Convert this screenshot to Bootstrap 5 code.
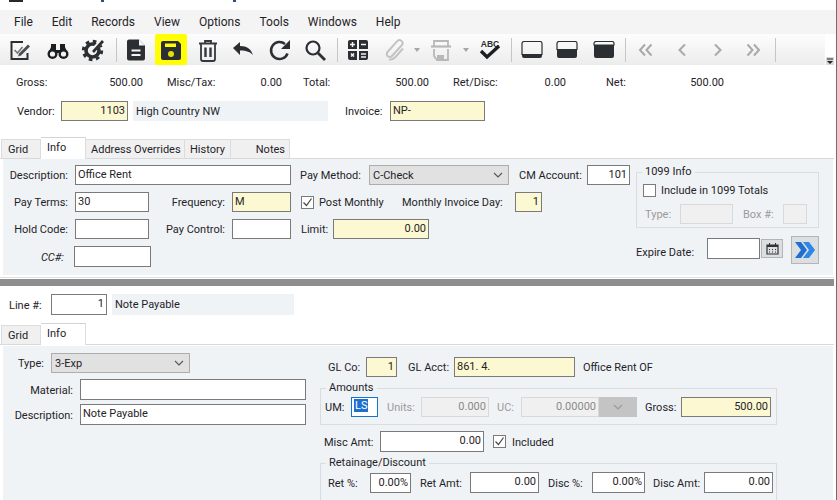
<!DOCTYPE html>
<html lang="en">
<head>
<meta charset="utf-8">
<title>Records</title>
<link href="https://cdn.jsdelivr.net/npm/bootstrap@5.3.0/dist/css/bootstrap.min.css" rel="stylesheet">
<style>
html,body{height:500px;overflow:hidden;background:#fff;}
body{font-family:Roboto,"Noto Sans",sans-serif;font-size:11px;line-height:14px;color:#1f2328;white-space:nowrap;}
.frame{width:837px;height:500px;overflow:hidden;border-right:1px solid #6f6f6f;position:relative;}
.titlestrip{height:10px;display:flex;align-items:flex-start;}
.titlemark{height:2px;background:#2a2a2a;display:block;}
.tm1{width:14px;margin-left:9px;}
.tm2{width:3px;margin-left:78px;background:#2c4f86;}
.tm3{width:3px;margin-left:129px;background:#2c4f86;}
.menubar{height:24px;background:#f4f4f4;font-size:12px;padding-left:14px;align-items:center;}
.menubar span{display:block;}
.menubar .mg{margin-left:19px;}
.toolwrap{position:relative;height:31px;background:#fff;}
.toolbar{height:31px;width:825px;background:linear-gradient(#fdfdfd,#ececec);padding-left:10px;align-items:center;}
.overflowbtn{position:absolute;left:826px;top:23px;width:8px;height:8px;background:#d8d8d8;}
.overflowbtn svg{display:block;}
.slot{width:20px;height:31px;display:flex;justify-content:center;align-items:center;flex:none;}
.slot svg{flex:none;display:block;}
.hilite{background:#ffff00;width:32px;margin-left:9px;margin-right:-6px;border-radius:2px;height:31px;}
.sepline{width:1px;height:24px;background:#c6c6c6;}
.tabsrow{height:21px;align-items:flex-end;padding-left:1px;}
.tabitem{height:19px;background:#f0f0f0;border:1px solid #dcdcdc;border-bottom:0;border-left:0;padding:3px 0 0 5px;display:block;}
.tabitem.first{border-left:1px solid #dcdcdc;padding-left:6px;}
.tabitem.on{height:22px;background:#fff;padding-left:6px;padding-top:3px;position:relative;margin-bottom:-1px;border-top:1px solid #d4d4d4;}
.panelbox{background:#f0f3f6;margin-left:3px;width:830px;}
.panelline{border-top:1px solid #d9d9d9;width:834px;height:1px;}
.panelline.two{height:2px;}
.splitter{width:834px;height:10px;border-top:1px solid #dedede;margin-top:2px;padding-top:1px;}
.splitter div{height:7px;background:#8e8e8e;}
.ctl{height:20px;border:1px solid #7a7a7a;background:#fff;padding:0 2px;line-height:17px;color:#1f2328;flex:none;display:block;}
.ctl.h21{height:21px;}
.yel{background:#fcf9d2;}
.numr{text-align:right;}
.off{background:#f0f0f0;border-color:#d9d9d9;color:#8a8a8a;}
.pick{background:#e1e1e1;border-color:#adadad;display:flex;justify-content:space-between;align-items:center;padding:0 5px 0 3px;}
.lbl{flex:none;display:block;}
.formrow .lbl{padding-top:2px;}
.lbl.r{text-align:right;}
.lblemph{font-style:italic;}
.muted{color:#9a9a9a;}
.formrow{display:flex;align-items:center;}
.topline{align-items:flex-start;}
.box{border:1px solid #7a7a7a;width:13px;height:13px;background:#fff;flex:none;display:flex;align-items:center;justify-content:center;}
.box svg{display:block;}
.infofill{background:#f0f3f6;height:20px;padding-left:3px;line-height:21px;flex:none;}
.infofill.tall{height:21px;}
.gfield{border:1px solid #d9dde0;margin:0;padding:0;}
.gfield legend{float:none;width:auto;font-size:11px;line-height:14px;margin:0 0 0 5px;padding:0 3px;}
.sumrow{height:14px;margin-top:10px;}
.wd19{width:19px}.wd24{width:24px}.wd25{width:25px}.wd27{width:27px}.wd28{width:28px}.wd30{width:30px}.wd31{width:31px}.wd33{width:33px}.wd35{width:35px}.wd37{width:37px}.wd38{width:38px}.wd39{width:39px}.wd40{width:40px}.wd41{width:41px}.wd43{width:43px}.wd44{width:44px}.wd45{width:45px}.wd46{width:46px}.wd51{width:51px}.wd53{width:53px}.wd56{width:56px}.wd59{width:59px}.wd61{width:61px}.wd62{width:62px}.wd65{width:65px}.wd67{width:67px}.wd68{width:68px}.wd69{width:69px}.wd74{width:74px}.wd76{width:76px}.wd77{width:77px}.wd78{width:78px}.wd90{width:90px}.wd95{width:95px}.wd96{width:96px}.wd99{width:99px}.wd102{width:102px}.wd104{width:104px}.wd121{width:121px}.wd139{width:139px}.wd140{width:140px}.wd182{width:182px}.wd195{width:195px}.wd216{width:216px}.wd226{width:226px}
.lf1{margin-left:1px}.lf2{margin-left:2px}.lf3{margin-left:3px}.lf4{margin-left:4px}.lf5{margin-left:5px}.lf6{margin-left:6px}.lf7{margin-left:7px}.lf8{margin-left:8px}.lf9{margin-left:9px}.lf10{margin-left:10px}.lf11{margin-left:11px}.lf15{margin-left:15px}.lf16{margin-left:16px}.lf17{margin-left:17px}.lf18{margin-left:18px}.lf21{margin-left:21px}.lf24{margin-left:24px}.lf40{margin-left:40px}
.tp2{margin-top:2px}.tp3{margin-top:3px}.tp8{margin-top:8px}
.rowgap{margin-top:7px;}
.rowgap6{margin-top:6px;}
.vendorrow{margin-top:12px;}
.linerow{margin-top:7px;}
.leftcol{width:633px;flex:none;padding-top:6px;}
.rightcol{width:183px;flex:none;padding-top:6px;}
.p1{height:116px;}
.p2{height:170px;display:flex;}
.p2left{width:317px;flex:none;padding-top:7px;}
.p2right{width:460px;flex:none;padding-top:11px;}
.f1099{height:63px;width:183px;}
.bigbtn{width:28px;height:28px;background:#dcdfe2;border:1px solid #b5b5b5;flex:none;display:flex;align-items:center;justify-content:center;}
.calbtn{width:22px;height:19px;background:#dcdfe2;border:1px solid #b5b5b5;flex:none;display:flex;align-items:center;justify-content:center;}
.sel{background:#1f6fd0;color:#fff;display:inline-block;line-height:13px;padding:0 1px;}
.focusbox{border-color:#1673d0;padding:1px 2px;line-height:14px;}
.drop{width:38px;height:20px;background:#c4c4c4;flex:none;display:flex;align-items:center;justify-content:center;}
.fset-am{width:457px;height:44px;}
.fset-rt{width:457px;height:50px;}
</style>
</head>
<body>
<div class="frame">
  <div class="titlestrip"><span class="titlemark tm1"></span><span class="titlemark tm2"></span><span class="titlemark tm3"></span></div>
  <nav class="menubar d-flex">
    <span>File</span><span class="mg">Edit</span><span class="mg">Records</span><span class="mg">View</span><span class="mg">Options</span><span class="mg">Tools</span><span class="mg">Windows</span><span class="mg">Help</span>
  </nav>
  <div class="toolwrap">
    <div class="toolbar d-flex">
      <div class="slot"><svg width="24" height="24" viewBox="0 0 24 24"><path d="M15 4H3.500v17h16v-6" fill="none" stroke="#2b2f33" stroke-width="2"/><path d="M6.500 12l3 3 5-6" fill="none" stroke="#777" stroke-width="1.600"/><path d="M11 15.500l9-9 2 2-9 9-3 1z" fill="#4a4d50"/></svg></div>
      <div class="slot lf18"><svg width="24" height="24" viewBox="0 0 24 24"><g fill="#1c1f22"><path d="M5 6h5v4H5zM14 6h5v4h-5z"/><path d="M5 9h5v3h4V9h5l3 7h-8v-1h-4v1H2z"/><circle cx="6.500" cy="16" r="5"/><circle cx="17.500" cy="16" r="5"/></g><circle cx="6.500" cy="16" r="2.600" fill="#f4f4f4"/><circle cx="17.500" cy="16" r="2.600" fill="#f4f4f4"/></svg></div>
      <div class="slot lf15"><svg width="24" height="24" viewBox="0 0 24 24"><circle cx="11.500" cy="12.500" r="6.500" fill="none" stroke="#2b2f33" stroke-width="3.600"/><circle cx="11.500" cy="12.500" r="9.200" fill="none" stroke="#2b2f33" stroke-width="3" stroke-dasharray="3.600 3.630"/><path d="M11 13L21 3" stroke="#f4f4f4" stroke-width="4.500"/><path d="M11 13l10-11 2 2-10 11z" fill="#2b2f33"/></svg></div>
      <div class="slot lf3"><div class="sepline"></div></div>
      <div class="slot"><svg width="24" height="24" viewBox="0 0 24 24"><path d="M5 1.500h10l6 6v13a2 2 0 0 1-2 2H5a2 2 0 0 1-2-2v-17a2 2 0 0 1 2-2z" fill="#2b2f33"/><path d="M15 1.500l6 6h-6z" fill="#f6f6f6"/><path d="M7.500 12.500h9M7.500 17h9" stroke="#f4f4f4" stroke-width="2"/></svg></div>
      <div class="slot hilite"><svg width="24" height="24" viewBox="0 0 24 24"><path d="M4 3h15l3 3v14a2 2 0 0 1-2 2H4a2 2 0 0 1-2-2V5a2 2 0 0 1 2-2z" fill="#2b2f33"/><path d="M6 5.500h11V9H6z" fill="#ffff00"/><circle cx="12" cy="16" r="3" fill="#e6e000"/></svg></div>
      <div class="slot lf17"><svg width="24" height="24" viewBox="0 0 24 24"><path d="M3 5.500h18M9 5.500V3h6v2.500" fill="none" stroke="#34383c" stroke-width="1.800"/><path d="M5 6v15a2 2 0 0 0 2 2h10a2 2 0 0 0 2-2V6" fill="none" stroke="#34383c" stroke-width="1.800"/><path d="M9.500 9.500v9.500M14.500 9.500v9.500" stroke="#34383c" stroke-width="2.400"/></svg></div>
      <div class="slot lf15"><svg width="24" height="24" viewBox="0 0 24 24"><path d="M2 10l7-6v4c7 0 11 3 13 9-3-3-6-4.500-13-4.500V17z" fill="#2b2f33"/></svg></div>
      <div class="slot lf17"><svg width="24" height="24" viewBox="0 0 24 24"><path d="M19.500 15.500A8.500 8.500 0 1 1 17 6" fill="none" stroke="#2b2f33" stroke-width="2.500"/><path d="M22 2v9h-9z" fill="#2b2f33"/></svg></div>
      <div class="slot lf15"><svg width="24" height="24" viewBox="0 0 24 24"><circle cx="10" cy="10" r="6.500" fill="none" stroke="#2b2f33" stroke-width="2.200"/><path d="M15 15l7 7" stroke="#2b2f33" stroke-width="2.800"/></svg></div>
      <div class="slot lf2"><div class="sepline"></div></div>
      <div class="slot lf1"><svg width="24" height="24" viewBox="0 0 24 24"><g fill="#2b2f33"><path d="M4 2h7v9H2V4a2 2 0 0 1 2-2zM13 2h7a2 2 0 0 1 2 2v7h-9zM2 13h9v9H4a2 2 0 0 1-2-2zM13 13h9v7a2 2 0 0 1-2 2h-7z"/></g><path d="M4 6.500h5M6.500 4v5M15 6.500h5M15 16h5M15 19h5" stroke="#f4f4f4" stroke-width="1.500"/><path d="M5 15.500l3 3M8 15.500l-3 3" stroke="#f4f4f4" stroke-width="1.500"/></svg></div>
      <div class="slot lf16"><svg width="24" height="24" viewBox="0 0 24 24"><path d="M19 8l-9 10a3 3 0 0 1-4.500-4L15 3.500a2 2 0 0 1 5 3.500L9.500 18.500M7 21.500c3 .5 5-1 6-2l8-9" fill="none" stroke="#c2c2c2" stroke-width="1.900"/></svg></div>
      <div class="slot lf3"><svg width="8" height="4" viewBox="0 0 8 4"><path d="M1 0h6L4 4z" fill="#a6a6a6"/></svg></div>
      <div class="slot lf4"><svg width="24" height="24" viewBox="0 0 24 24"><path d="M5 8V3h14v5" fill="none" stroke="#b8b8b8" stroke-width="1.800"/><path d="M2 8.500h20" stroke="#b8b8b8" stroke-width="2.200"/><path d="M5 11v7l3 4h11V11" fill="none" stroke="#b8b8b8" stroke-width="1.800"/><path d="M8 17h7v5H8z" fill="#b8b8b8"/></svg></div>
      <div class="slot lf5"><svg width="8" height="4" viewBox="0 0 8 4"><path d="M1 0h6L4 4z" fill="#a6a6a6"/></svg></div>
      <div class="slot lf4"><svg width="24" height="24" viewBox="0 0 24 24"><text x="12" y="9" text-anchor="middle" font-family="Liberation Sans" font-weight="700" font-size="8.500" fill="#2b2f33">ABC</text><path d="M3 13l6 6L21 8" fill="none" stroke="#1c1f22" stroke-width="3.400"/></svg></div>
      <div class="slot lf1"><div class="sepline"></div></div>
      <div class="slot lf1"><svg width="22" height="18" viewBox="0 0 22 18"><path d="M3 .5h16a2 2 0 0 1 2 2v11H1v-11a2 2 0 0 1 2-2z" fill="none" stroke="#2b2f33" stroke-width="1.200"/><path d="M1 13.500h20V15a2 2 0 0 1-2 2H3a2 2 0 0 1-2-2z" fill="#2b2f33"/></svg></div>
      <div class="slot lf15"><svg width="22" height="18" viewBox="0 0 22 18"><path d="M3 .5h16a2 2 0 0 1 2 2v6H1v-6a2 2 0 0 1 2-2z" fill="none" stroke="#2b2f33" stroke-width="1.200"/><path d="M1 8h20v7a2 2 0 0 1-2 2H3a2 2 0 0 1-2-2z" fill="#2b2f33"/></svg></div>
      <div class="slot lf17"><svg width="22" height="18" viewBox="0 0 22 18"><path d="M3 .5h16a2 2 0 0 1 2 2V4H1V2.500a2 2 0 0 1 2-2z" fill="none" stroke="#2b2f33" stroke-width="1.200"/><path d="M1 4h20v11a2 2 0 0 1-2 2H3a2 2 0 0 1-2-2z" fill="#2b2f33"/></svg></div>
      <div class="slot lf1"><div class="sepline"></div></div>
      <div class="slot lf1"><svg width="16" height="14" viewBox="0 0 16 14"><path d="M7 1.500L2 7l5 5.500M13.500 1.500L8.500 7l5 5.500" fill="none" stroke="#a9a9a9" stroke-width="2"/></svg></div>
      <div class="slot lf16"><svg width="10" height="14" viewBox="0 0 10 14"><path d="M8 1.500L2.500 7 8 12.500" fill="none" stroke="#a9a9a9" stroke-width="2"/></svg></div>
      <div class="slot lf16"><svg width="10" height="14" viewBox="0 0 10 14"><path d="M2 1.500L7.500 7 2 12.500" fill="none" stroke="#a9a9a9" stroke-width="2"/></svg></div>
      <div class="slot lf15"><svg width="16" height="14" viewBox="0 0 16 14"><path d="M2.500 1.500l5 5.500-5 5.500M9 1.500l5 5.500-5 5.500" fill="none" stroke="#a9a9a9" stroke-width="2"/></svg></div>
      <div class="slot lf2"><div class="sepline"></div></div>
    </div>
    <div class="overflowbtn"><svg width="8" height="8" viewBox="0 0 8 8"><path d="M1 1.500h6v1H1zM1 4h6L4 7z" fill="#222"/></svg></div>
  </div>

  <div class="formrow sumrow">
    <span class="lbl lf16 wd35">Gross:</span><span class="lbl r wd90 lf2">500.00</span>
    <span class="lbl lf24 wd62">Misc/Tax:</span><span class="lbl r wd53">0.00</span>
    <span class="lbl lf21 wd46">Total:</span><span class="lbl r wd78 lf2">500.00</span>
    <span class="lbl lf24 wd62">Ret/Disc:</span><span class="lbl r wd51">0.00</span>
    <span class="lbl lf40 wd56">Net:</span><span class="lbl r wd62">500.00</span>
  </div>
  <div class="formrow vendorrow">
    <span class="lbl lf17 wd37">Vendor:</span>
    <span class="ctl yel numr lf7 wd67">1103</span>
    <span class="infofill lf5 wd195">High Country NW</span>
    <span class="lbl lf17 wd38">Invoice:</span>
    <span class="ctl yel lf7 wd95">NP-</span>
  </div>

  <div class="tabsrow d-flex mt-3">
    <span class="tabitem first wd40">Grid</span><span class="tabitem on wd45">Info</span><span class="tabitem wd99">Address Overrides</span><span class="tabitem wd46">History</span><span class="tabitem wd59 text-end pe-1">Notes</span>
  </div>
  <div class="panelline"></div>
  <div class="panelbox p1 d-flex">
    <div class="leftcol">
      <div class="formrow">
        <span class="lbl r wd65">Description:</span><span class="ctl lf7 wd216">Office Rent</span>
        <span class="lbl lf9 wd61">Pay Method:</span><span class="ctl pick lf8 wd140">C-Check<svg width="10" height="6" viewBox="0 0 10 6"><path d="M1 1l4 4 4-4" fill="none" stroke="#555" stroke-width="1.100"/></svg></span>
        <span class="lbl lf10 wd61">CM Account:</span><span class="ctl numr lf7 wd43">101</span>
      </div>
      <div class="formrow rowgap">
        <span class="lbl r wd65">Pay Terms:</span><span class="ctl lf7 wd74">30</span>
        <span class="lbl r wd76">Frequency:</span><span class="ctl yel lf7 wd59">M</span>
        <span class="box lf10"><svg width="11" height="11" viewBox="0 0 11 11"><path d="M1.500 5.500l3 3 5-7" fill="none" stroke="#444" stroke-width="1.200"/></svg></span>
        <span class="lbl lf5 wd62">Post Monthly</span>
        <span class="lbl lf21 wd102">Monthly Invoice Day:</span><span class="ctl yel numr lf11 wd27">1</span>
      </div>
      <div class="formrow rowgap">
        <span class="lbl r wd65">Hold Code:</span><span class="ctl lf7 wd74"></span>
        <span class="lbl r wd76">Pay Control:</span><span class="ctl lf7 wd59"></span>
        <span class="lbl lf10 wd25">Limit:</span><span class="ctl yel numr lf7 wd96">0.00</span>
      </div>
      <div class="formrow rowgap">
        <span class="lbl r wd61 lblemph">CC#:</span><span class="ctl h21 lf10 wd77"></span>
      </div>
    </div>
    <div class="rightcol">
      <fieldset class="gfield f1099">
        <legend>1099 Info</legend>
        <div class="formrow tp3 lf6">
          <span class="box"></span><span class="lbl lf5">Include in 1099 Totals</span>
        </div>
        <div class="formrow rowgap6 lf8">
          <span class="lbl muted wd28">Type:</span><span class="ctl off lf7 wd53"></span>
          <span class="lbl muted lf10 wd33">Box #:</span><span class="ctl off lf7 wd24"></span>
        </div>
      </fieldset>
      <div class="formrow topline mt-2">
        <span class="lbl wd61 tp8">Expire Date:</span>
        <span class="ctl h21 lf10 tp2 wd53"></span>
        <span class="calbtn lf1 tp3"><svg width="13" height="13" viewBox="0 0 13 13"><path d="M1 3h11v9H1z" fill="none" stroke="#333" stroke-width="1.200"/><path d="M1 3h11v2H1zM3 1h1v3H3zM9 1h1v3H9z" fill="#333"/><path d="M3 7h1v1H3zM6 7h1v1H6zM9 7h1v1H9zM3 9.500h1v1H3zM6 9.500h1v1H6zM9 9.500h1v1H9z" fill="#333"/></svg></span>
        <span class="bigbtn lf8"><svg width="22" height="20" viewBox="0 0 22 20"><path d="M1 2h6l6 8-6 8H1l6-8z" fill="#1f6fd0"/><path d="M9 2h6l6 8-6 8H9l6-8z" fill="#2e86e6"/></svg></span>
      </div>
    </div>
  </div>
  <div class="splitter"><div></div></div>

  <div class="formrow linerow">
    <span class="lbl lf9 wd35">Line #:</span>
    <span class="ctl h21 numr lf7 wd56">1</span>
    <span class="infofill tall lf5 wd182">Note Payable</span>
  </div>

  <div class="tabsrow d-flex mt-2">
    <span class="tabitem first wd40">Grid</span><span class="tabitem on wd45">Info</span>
  </div>
  <div class="panelline two"></div>
  <div class="panelbox p2">
    <div class="p2left">
      <div class="formrow">
        <span class="lbl lf6 wd35 text-end">Type:</span><span class="ctl pick lf7 wd139">3-Exp<svg width="10" height="6" viewBox="0 0 10 6"><path d="M1 1l4 4 4-4" fill="none" stroke="#555" stroke-width="1.100"/></svg></span>
      </div>
      <div class="formrow rowgap6">
        <span class="lbl r wd67 lf3">Material:</span><span class="ctl h21 lf7 wd226"></span>
      </div>
      <div class="formrow mt-1">
        <span class="lbl r wd67 lf3">Description:</span><span class="ctl h21 lf7 wd226">Note Payable</span>
      </div>
    </div>
    <div class="p2right">
      <div class="formrow">
        <span class="lbl lf8 wd31">GL Co:</span><span class="ctl yel numr lf7 wd31">1</span>
        <span class="lbl lf11 wd39">GL Acct:</span><span class="ctl yel lf7 wd121">861. 4.</span>
        <span class="lbl lf8">Office Rent OF</span>
      </div>
      <fieldset class="gfield fset-am mt-1">
        <legend>Amounts</legend>
        <div class="formrow tp2 lf4">
          <span class="lbl wd19">UM:</span><span class="ctl focusbox lf7 wd27"><span class="sel">LS</span></span>
          <span class="lbl muted lf9 wd27">Units:</span><span class="ctl off numr lf7 wd68">0.000</span>
          <span class="lbl muted lf8 wd19">UC:</span><span class="ctl off numr lf5 wd78">0.00000</span><span class="drop"><svg width="10" height="6" viewBox="0 0 10 6"><path d="M1 1l4 4 4-4" fill="none" stroke="#999" stroke-width="1.100"/></svg></span>
          <span class="lbl lf8 wd30">Gross:</span><span class="ctl yel numr lf6 wd90">500.00</span>
        </div>
      </fieldset>
      <div class="formrow rowgap6">
        <span class="lbl lf4 wd46">Misc Amt:</span><span class="ctl h21 numr lf10 wd104">0.00</span>
        <span class="box lf9"><svg width="11" height="11" viewBox="0 0 11 11"><path d="M1.500 5.500l3 3 5-7" fill="none" stroke="#444" stroke-width="1.200"/></svg></span>
        <span class="lbl lf6">Included</span>
      </div>
      <fieldset class="gfield fset-rt mt-1">
        <legend>Retainage/Discount</legend>
        <div class="formrow tp2 lf7">
          <span class="lbl wd35">Ret %:</span><span class="ctl numr lf7 wd41">0.00%</span>
          <span class="lbl lf9 wd43">Ret Amt:</span><span class="ctl numr h21 lf7 wd69">0.00</span>
          <span class="lbl lf9 wd37">Disc %:</span><span class="ctl numr h21 lf7 wd53">0.00%</span>
          <span class="lbl lf8 wd44">Disc Amt:</span><span class="ctl numr h21 lf7 wd69">0.00</span>
        </div>
      </fieldset>
    </div>
  </div>
</div>
</body>
</html>
